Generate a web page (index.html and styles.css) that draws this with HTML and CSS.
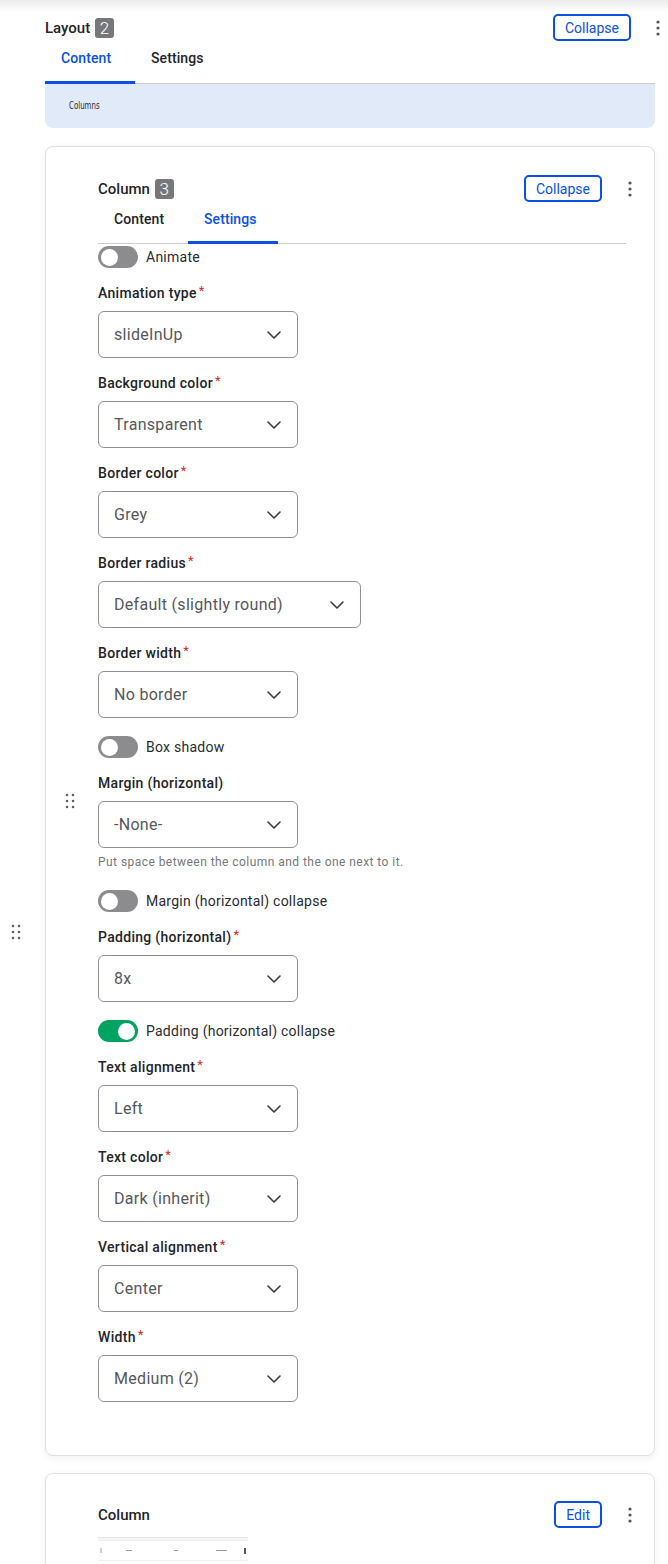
FILE: index.html
```html
<!DOCTYPE html>
<html lang="en">
<head>
<meta charset="utf-8">
<title>Layout</title>
<link rel="stylesheet" href="styles.css">
</head>
<body>
<div class="topshade"></div>
<div class="page">
  <div class="outer-handle">
    <svg class="grip" width="10" height="16" viewBox="0 0 10 16"><circle cx="2" cy="2" r="1.3"/><circle cx="8" cy="2" r="1.3"/><circle cx="2" cy="8" r="1.3"/><circle cx="8" cy="8" r="1.3"/><circle cx="2" cy="14" r="1.3"/><circle cx="8" cy="14" r="1.3"/></svg>
  </div>
  <div class="layout">
    <div class="item-header">
      <div class="title">Layout <span class="badge">2</span></div>
      <button class="btn">Collapse</button>
      <span class="kebab outer"><svg width="4" height="16" viewBox="0 0 4 16"><circle cx="2" cy="2" r="1.6"/><circle cx="2" cy="8" r="1.6"/><circle cx="2" cy="14" r="1.6"/></svg></span>
    </div>
    <div class="tabs">
      <span class="tab active">Content</span>
      <span class="tab">Settings</span>
    </div>
    <div class="preview"><span class="preview-text">Columns</span></div>

    <div class="card">
      <div class="card-handle">
        <svg class="grip" width="10" height="16" viewBox="0 0 10 16"><circle cx="2" cy="2" r="1.3"/><circle cx="8" cy="2" r="1.3"/><circle cx="2" cy="8" r="1.3"/><circle cx="8" cy="8" r="1.3"/><circle cx="2" cy="14" r="1.3"/><circle cx="8" cy="14" r="1.3"/></svg>
      </div>
      <div class="card-body">
        <div class="item-header inner">
          <div class="title">Column <span class="badge">3</span></div>
          <button class="btn">Collapse</button>
          <span class="kebab inner-k"><svg width="4" height="16" viewBox="0 0 4 16"><circle cx="2" cy="2" r="1.6"/><circle cx="2" cy="8" r="1.6"/><circle cx="2" cy="14" r="1.6"/></svg></span>
        </div>
        <div class="tabs inner-tabs">
          <span class="tab">Content</span>
          <span class="tab active">Settings</span>
        </div>

        <div class="toggle-row first"><span class="switch"><span class="knob"></span></span><span class="toggle-label">Animate</span></div>

        <div class="field">
          <div class="label">Animation type<span class="req">*</span></div>
          <div class="select"><span>slideInUp</span><svg class="chev" width="14" height="8" viewBox="0 0 14 8"><polyline points="1,1 7,7 13,1"/></svg></div>
        </div>
        <div class="field">
          <div class="label">Background color<span class="req">*</span></div>
          <div class="select"><span>Transparent</span><svg class="chev" width="14" height="8" viewBox="0 0 14 8"><polyline points="1,1 7,7 13,1"/></svg></div>
        </div>
        <div class="field">
          <div class="label">Border color<span class="req">*</span></div>
          <div class="select"><span>Grey</span><svg class="chev" width="14" height="8" viewBox="0 0 14 8"><polyline points="1,1 7,7 13,1"/></svg></div>
        </div>
        <div class="field">
          <div class="label">Border radius<span class="req">*</span></div>
          <div class="select wide"><span>Default (slightly round)</span><svg class="chev" width="14" height="8" viewBox="0 0 14 8"><polyline points="1,1 7,7 13,1"/></svg></div>
        </div>
        <div class="field">
          <div class="label">Border width<span class="req">*</span></div>
          <div class="select"><span>No border</span><svg class="chev" width="14" height="8" viewBox="0 0 14 8"><polyline points="1,1 7,7 13,1"/></svg></div>
        </div>

        <div class="toggle-row"><span class="switch"><span class="knob"></span></span><span class="toggle-label">Box shadow</span></div>

        <div class="field">
          <div class="label">Margin (horizontal)</div>
          <div class="select"><span>-None-</span><svg class="chev" width="14" height="8" viewBox="0 0 14 8"><polyline points="1,1 7,7 13,1"/></svg></div>
          <div class="help">Put space between the column and the one next to it.</div>
        </div>

        <div class="toggle-row after-help"><span class="switch"><span class="knob"></span></span><span class="toggle-label">Margin (horizontal) collapse</span></div>

        <div class="field">
          <div class="label">Padding (horizontal)<span class="req">*</span></div>
          <div class="select"><span>8x</span><svg class="chev" width="14" height="8" viewBox="0 0 14 8"><polyline points="1,1 7,7 13,1"/></svg></div>
        </div>

        <div class="toggle-row"><span class="switch on"><span class="knob"></span></span><span class="toggle-label">Padding (horizontal) collapse</span></div>

        <div class="field">
          <div class="label">Text alignment<span class="req">*</span></div>
          <div class="select"><span>Left</span><svg class="chev" width="14" height="8" viewBox="0 0 14 8"><polyline points="1,1 7,7 13,1"/></svg></div>
        </div>
        <div class="field">
          <div class="label">Text color<span class="req">*</span></div>
          <div class="select"><span>Dark (inherit)</span><svg class="chev" width="14" height="8" viewBox="0 0 14 8"><polyline points="1,1 7,7 13,1"/></svg></div>
        </div>
        <div class="field">
          <div class="label">Vertical alignment<span class="req">*</span></div>
          <div class="select"><span>Center</span><svg class="chev" width="14" height="8" viewBox="0 0 14 8"><polyline points="1,1 7,7 13,1"/></svg></div>
        </div>
        <div class="field">
          <div class="label">Width<span class="req">*</span></div>
          <div class="select"><span>Medium (2)</span><svg class="chev" width="14" height="8" viewBox="0 0 14 8"><polyline points="1,1 7,7 13,1"/></svg></div>
        </div>
      </div>
    </div>

    <div class="card second">
      <div class="card-handle empty"></div>
      <div class="card-body">
        <div class="item-header inner">
          <div class="title">Column</div>
          <button class="btn">Edit</button>
          <span class="kebab inner-k"><svg width="4" height="16" viewBox="0 0 4 16"><circle cx="2" cy="2" r="1.6"/><circle cx="2" cy="8" r="1.6"/><circle cx="2" cy="14" r="1.6"/></svg></span>
        </div>
        <div class="thumb">
          <div class="thumb-top"></div>
          <div class="thumb-row">
            <span class="tb tb-a"></span>
            <span class="tb tb-b"></span>
            <span class="tb tb-c"></span>
            <span class="tb tb-d"></span>
            <span class="tb tb-e"></span>
          </div>
        </div>
      </div>
    </div>
  </div>
</div>
</body>
</html>
```

FILE: styles.css
```css
* { box-sizing: border-box; }
html, body { margin: 0; padding: 0; background: #fff; }
body {
  font-family: Roboto, "Liberation Sans", Arial, sans-serif;
  color: #232429;
  width: 668px;
  overflow: hidden;
}
.topshade {
  height: 12px;
  background: linear-gradient(#ebebeb, #ffffff);
}
.page {
  display: flex;
}
.outer-handle {
  width: 45px;
  flex: none;
  padding-top: 912px;
  padding-left: 11px;
}
.grip { display: block; fill: #5f6066; }
.layout {
  width: 610px;
  flex: none;
}
.item-header {
  display: flex;
  align-items: center;
  height: 27px;
  margin-top: 2px;
  margin-right: -13px;
}
.item-header.inner {
  margin-top: 0;
  margin-right: -14px;
}
.title {
  flex: 1;
  display: flex;
  align-items: center;
  font-size: 15px;
  font-weight: 500;
  color: #232429;
  white-space: pre;
}
.badge {
  display: inline-flex;
  align-items: center;
  justify-content: center;
  height: 20px;
  min-width: 19px;
  padding: 0 4px;
  margin-left: 1px;
  border-radius: 3px;
  background: #777779;
  color: #fff;
  font-size: 17px;
  font-weight: 300;
}
.btn {
  font-family: Roboto, "Liberation Sans", Arial, sans-serif;
  height: 27px;
  padding: 0 10px;
  border: 2px solid #0b4fe3;
  border-radius: 5px;
  background: #fff;
  color: #0b4fe3;
  font-size: 14px;
  font-weight: 400;
  line-height: 1;
}
.kebab {
  width: 20px;
  display: flex;
  justify-content: center;
  fill: #55565c;
}
.kebab.outer { margin-left: 17px; }
.kebab.inner-k { margin-left: 18px; }
.tabs {
  display: flex;
  border-bottom: 1px solid #cbcbd0;
}
.tab {
  min-width: 90px;
  padding: 7px 16px 13px;
  line-height: 20px;
  font-size: 14px;
  font-weight: 500;
  letter-spacing: 0.1px;
  color: #232429;
  border-bottom: 3px solid transparent;
  margin-bottom: -1px;
}
.inner-tabs .tab {
  padding-bottom: 12px;
}
.tab.active {
  color: #0b4fe3;
  border-bottom-color: #0b4fe3;
}
.preview {
  height: 44px;
  background: #e1eaf9;
  border-radius: 0 0 8px 8px;
  padding: 10px 0 0 24px;
}
.preview-text {
  display: inline-block;
  font-family: "DejaVu Sans Condensed", "DejaVu Sans", sans-serif;
  font-size: 10px;
  color: #2a2a2a;
  transform: scaleX(0.78);
  transform-origin: left center;
}
.card {
  margin-top: 18px;
  display: flex;
  border: 1px solid #e0e0e3;
  border-radius: 8px;
  box-shadow: 0 2px 8px rgba(0, 0, 0, 0.06);
  background: #fff;
}
.card.second {
  margin-top: 17px;
}
.card-handle {
  width: 52px;
  flex: none;
  display: flex;
  align-items: center;
  padding-left: 19px;
}
.card-body {
  flex: 1;
  padding: 28px 28px 53px 0;
}
.card.second .card-body {
  padding-top: 27px;
  padding-bottom: 30px;
}
.toggle-row {
  display: flex;
  align-items: center;
  gap: 8px;
  margin-top: 18px;
}
.toggle-row.first { margin-top: 2px; }
.toggle-row.after-help { margin-top: 19px; }
.switch {
  width: 40px;
  height: 22px;
  border-radius: 11px;
  background: #8c8c8f;
  display: flex;
  align-items: center;
  padding: 0 3px;
}
.switch.on {
  background: #00a35f;
  justify-content: flex-end;
}
.knob {
  width: 17px;
  height: 17px;
  border-radius: 50%;
  background: #fff;
}
.toggle-label {
  font-size: 14px;
  color: #2a2b30;
  line-height: 20px;
  letter-spacing: 0.25px;
}
.field {
  margin-top: 15px;
}
.label {
  height: 20px;
  font-size: 14px;
  font-weight: 500;
  line-height: 20px;
  letter-spacing: 0.3px;
  color: #232429;
  margin-bottom: 8px;
  white-space: nowrap;
}
.req {
  color: #d32a2a;
  font-size: 13px;
  line-height: 0;
  margin-left: 2px;
  vertical-align: 3px;
  font-weight: 400;
}
.select {
  width: 200px;
  height: 47px;
  border: 1px solid #8f909a;
  border-radius: 6px;
  display: flex;
  align-items: center;
  justify-content: space-between;
  padding: 0 16px 0 15px;
  font-size: 16px;
  letter-spacing: 0.3px;
  color: #55575d;
  font-weight: 400;
}
.select.wide { width: 263px; }
.chev {
  fill: none;
  stroke: #3a3b40;
  stroke-width: 1.6;
  stroke-linecap: round;
  stroke-linejoin: round;
}
.help {
  margin-top: 6px;
  font-size: 12px;
  line-height: 17px;
  letter-spacing: 0.45px;
  color: #76777c;
}
.thumb {
  margin-top: 9px;
  width: 150px;
  height: 40px;
  background: #fff;
}
.thumb-top {
  height: 4px;
  border-top: 1px solid #e4e4e4;
  border-bottom: 1px solid #ececec;
  background: #f6f6f6;
}
.thumb-row {
  display: flex;
  align-items: center;
  height: 20px;
  border-bottom: 1px solid #efefef;
  padding: 0 2px;
}
.tb { height: 1px; background: #9a9a9a; }
.tb-a { width: 2px; height: 5px; background: #cfcfcf; }
.tb-b { width: 8px; margin-left: 24px; }
.tb-c { width: 5px; margin-left: 42px; }
.tb-d { width: 13px; margin-left: 38px; }
.tb-e { width: 3px; height: 6px; margin-left: 17px; background: #555; }
```
